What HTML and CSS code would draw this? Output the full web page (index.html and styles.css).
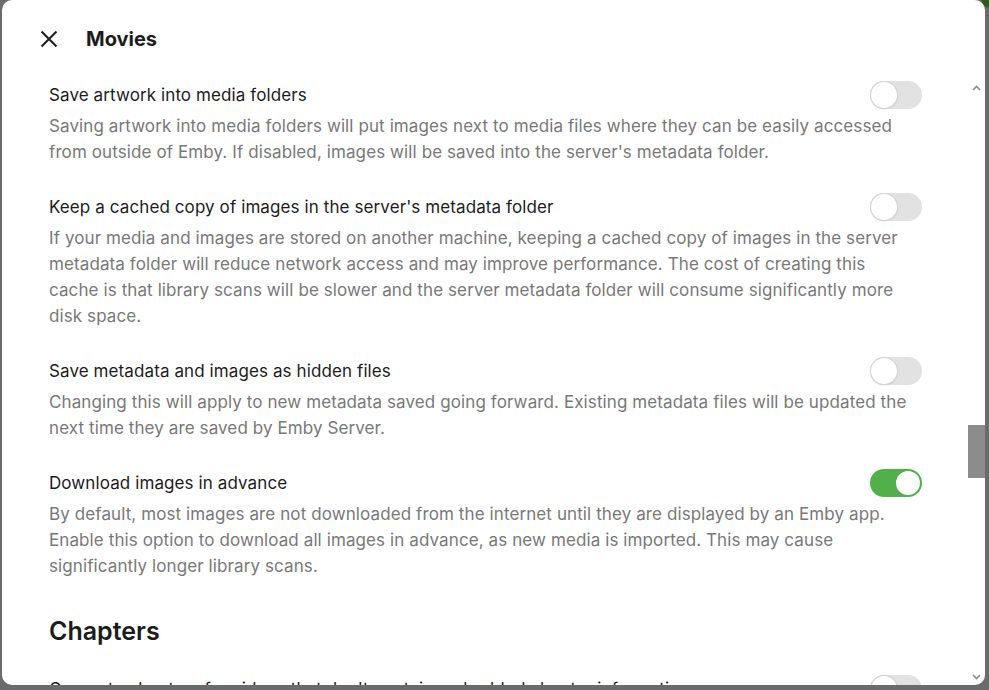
FILE: index.html
```html
<!DOCTYPE html>
<html lang="en">
<head>
    <meta charset="UTF-8">
    <meta name="viewport" content="width=device-width, initial-scale=1.0">
    <title>Movies - Library Settings</title>
    <link rel="stylesheet" href="styles.css">
</head>
<body>
    <div class="dialog">
        <div class="dialog-header">
            <button class="close-btn" aria-label="Close">
                <svg width="18" height="18" viewBox="0 0 18 18"><path d="M1.5 1.5 L16.5 16.5 M16.5 1.5 L1.5 16.5" stroke="#222" stroke-width="2.2" fill="none"/></svg>
            </button>
            <h2 class="dialog-title">Movies</h2>
        </div>

        <div class="dialog-body">
            <div class="dialog-content">
                <div class="setting">
                    <div class="setting-label">Save artwork into media folders</div>
                    <span class="toggle"></span>
                    <div class="setting-desc">Saving artwork into media folders will put images next to media files where they can be easily accessed from outside of Emby. If disabled, images will be saved into the server's metadata folder.</div>
                </div>

                <div class="setting">
                    <div class="setting-label">Keep a cached copy of images in the server's metadata folder</div>
                    <span class="toggle"></span>
                    <div class="setting-desc">If your media and images are stored on another machine, keeping a cached copy of images in the server metadata folder will reduce network access and may improve performance. The cost of creating this cache is that library scans will be slower and the server metadata folder will consume significantly more disk space.</div>
                </div>

                <div class="setting">
                    <div class="setting-label">Save metadata and images as hidden files</div>
                    <span class="toggle"></span>
                    <div class="setting-desc">Changing this will apply to new metadata saved going forward. Existing metadata files will be updated the next time they are saved by Emby Server.</div>
                </div>

                <div class="setting">
                    <div class="setting-label">Download images in advance</div>
                    <span class="toggle on"></span>
                    <div class="setting-desc">By default, most images are not downloaded from the internet until they are displayed by an Emby app. Enable this option to download all images in advance, as new media is imported. This may cause significantly longer library scans.</div>
                </div>

                <h3 class="section-title">Chapters</h3>

                <div class="setting">
                    <div class="setting-label">Generate chapters for videos that don't contain embedded chapter information</div>
                    <span class="toggle"></span>
                    <div class="setting-desc">Generates chapter markers at regular intervals for videos without chapters.</div>
                </div>
            </div>

            <!-- classic scrollbar -->
            <div class="scrollbar">
                <div class="scroll-btn">
                    <svg width="9" height="6" viewBox="0 0 9 6"><path d="M1 5 L4.5 1.5 L8 5" stroke="#8a8a8a" stroke-width="1.6" fill="none"/></svg>
                </div>
                <div class="scroll-track">
                    <div class="scroll-thumb"></div>
                </div>
                <div class="scroll-btn">
                    <svg width="9" height="6" viewBox="0 0 9 6"><path d="M1 1 L4.5 4.5 L8 1" stroke="#8a8a8a" stroke-width="1.6" fill="none"/></svg>
                </div>
            </div>
        </div>
    </div>
</body>
</html>
```

FILE: styles.css
```css
html, body {
    height: 100%;
}
body {
    margin: 0;
    background: radial-gradient(circle at 100% 0, #2e5a22 7px, transparent 8px), #6b6b6b;
    font-family: Inter, "Noto Sans", sans-serif;
    overflow: hidden;
}
.dialog {
    margin-left: 2px;
    width: 983px;
    height: 685px;
    background: #fff;
    border-radius: 10px;
    display: flex;
    flex-direction: column;
    overflow: hidden;
}
.dialog-header {
    height: 78px;
    flex: none;
    display: flex;
    align-items: center;
    padding-left: 38px;
}
.close-btn {
    background: none;
    border: none;
    padding: 0;
    width: 18px;
    height: 18px;
    display: flex;
    cursor: pointer;
}
.dialog-title {
    margin: 0 0 0 28px;
    font-size: 20px;
    font-weight: 700;
    color: #1c1c1c;
}
.dialog-body {
    flex: 1;
    display: flex;
    min-height: 0;
    padding-top: 1px;
}
.dialog-content {
    flex: 1;
    overflow: hidden;
    padding: 3px 46px 0 47px;
}
.setting {
    display: grid;
    grid-template-columns: 1fr 52px;
    column-gap: 12px;
    margin-bottom: 29px;
}
.setting-label {
    font-size: 17px;
    letter-spacing: 0.1px;
    line-height: 26px;
    color: #1c1c1c;
}
.setting-desc {
    grid-column: 1 / 3;
    margin: 5px 8px 0 0;
    font-size: 17px;
    letter-spacing: 0.1px;
    line-height: 26px;
    color: #787878;
}
.toggle {
    position: relative;
    width: 52px;
    height: 28px;
    margin: -1px 0;
    border-radius: 14px;
    background: #e2e2e2;
}
.toggle::after {
    content: "";
    position: absolute;
    left: 1px;
    top: 1px;
    width: 26px;
    height: 26px;
    border-radius: 50%;
    background: #fff;
    box-shadow: 0 0 0 1px #d2d2d2, 0 1px 2px rgba(0,0,0,0.15);
}
.toggle.on {
    background: #52b04b;
}
.toggle.on::after {
    left: 26px;
    top: 2px;
    width: 24px;
    height: 24px;
    box-shadow: none;
}
.section-title {
    margin: 37px 0 30px;
    font-size: 25px;
    line-height: 30px;
    font-weight: 600;
    color: #1c1c1c;
}
.scrollbar {
    width: 17px;
    flex: none;
    display: flex;
    flex-direction: column;
}
.scroll-btn {
    height: 17px;
    flex: none;
    display: flex;
    align-items: center;
    justify-content: center;
}
.scroll-track {
    flex: 1;
}
.scroll-thumb {
    margin-top: 329px;
    height: 53px;
    background: #8c8c8c;
}
```
